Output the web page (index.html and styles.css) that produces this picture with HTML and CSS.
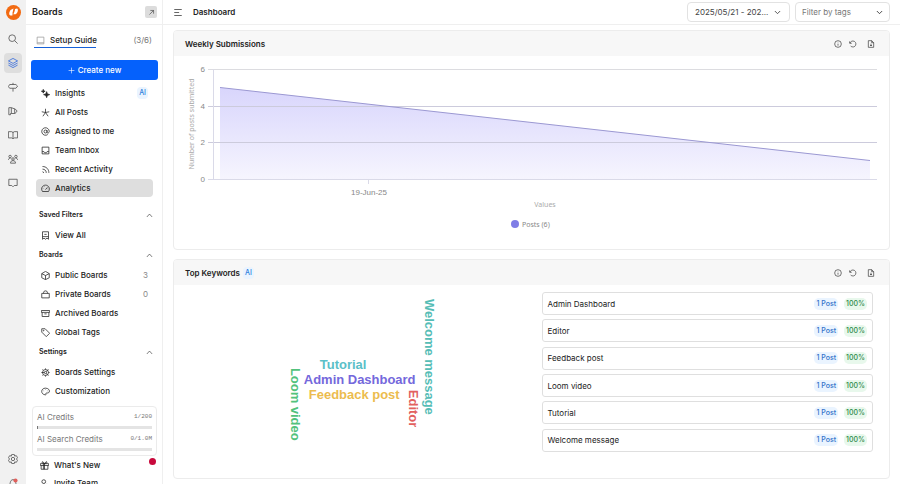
FILE: index.html
```html
<!DOCTYPE html>
<html lang="en">
<head>
    <meta charset="UTF-8">
    <meta name="viewport" content="width=device-width, initial-scale=1.0">
    <title>Dashboard</title>
    <link rel="stylesheet" href="styles.css">
</head>
<body>
    <svg class="sprite" aria-hidden="true">
        <symbol id="i-up" viewBox="0 0 24 24"><path d="M3 17l9-10 9 10"/></symbol>
        <symbol id="i-down" viewBox="0 0 24 24"><path d="M3 7l9 9 9-9"/></symbol>
        <symbol id="i-info" viewBox="0 0 24 24"><circle cx="12" cy="12" r="10"/><path d="M12 11v6M12 7v1"/></symbol>
        <symbol id="i-reset" viewBox="0 0 24 24"><path d="M2 4v6h6M3 9c2-4 5-6 9-6a9 9 0 1 1-7 15"/></symbol>
        <symbol id="i-file" viewBox="0 0 24 24"><path d="M4 2h10l6 6v14H4zM14 2v6h6M12 11v7M9 15l3 3 3-3"/></symbol>
    </svg>

    <div class="app">
        <nav class="rail" aria-label="Main">
            <a href="#" class="logo" aria-label="Home">
                <svg viewBox="0 0 30 30"><circle cx="15" cy="15" r="15" fill="#f26a12"/><path d="M9 10l6-3-2 9c0 2 2 2 3 0l2-8 4-1c3 1 2 7-1 10-2 2-4 2-6 1l-2 3h-4c-3-1-3-4-2-7z" fill="#fff"/><path d="M17 8l-4 13" stroke="#f26a12" stroke-width="1.5"/></svg>
            </a>
            <a href="#" class="rail-link" aria-label="Search"><svg class="icon" viewBox="0 0 24 24"><circle cx="10" cy="10" r="8"/><path d="M16 16l7 7"/></svg></a>
            <a href="#" class="rail-link active" aria-label="Boards"><svg class="icon" viewBox="0 0 24 24"><path d="M12 1l11 6-11 6L1 7zM1 12l11 6 11-6M1 17l11 6 11-6"/></svg></a>
            <a href="#" class="rail-link" aria-label="Roadmap"><svg class="icon" viewBox="0 0 24 24"><path d="M4 6h15l4 4-4 5H4l-3-4zM12 2v4M12 15v8"/></svg></a>
            <a href="#" class="rail-link" aria-label="Changelog"><svg class="icon" viewBox="0 0 24 24"><path d="M2 4h6l8 3v11H6v3H2zM8 4v13M16 6l6 6-6 7"/></svg></a>
            <a href="#" class="rail-link" aria-label="Help center"><svg class="icon" viewBox="0 0 24 24"><path d="M12 5v15M1 4h8l3 2 3-2h8v15h-8l-3 2-3-2H1z"/></svg></a>
            <a href="#" class="rail-link" aria-label="Users"><svg class="icon" viewBox="0 0 24 24"><circle cx="12" cy="12" r="3"/><circle cx="5" cy="6" r="3"/><circle cx="19" cy="6" r="3"/><path d="M6 22c0-4 2-6 6-6s6 2 6 6zM1 14c0-3 2-4 5-4M23 14c0-3-2-4-5-4"/></svg></a>
            <a href="#" class="rail-link" aria-label="Messages"><svg class="icon" viewBox="0 0 24 24"><path d="M2 3h20v15h-7l-3 3-3-3H2z"/></svg></a>
            <div class="rail-bottom">
                <a href="#" class="rail-link" aria-label="Settings"><svg class="icon" viewBox="0 0 24 24"><path d="M9 1h6l1 4 4-1 3 5-3 3 3 3-3 5-4-1-1 4H9l-1-4-4 1-3-5 3-3-3-3 3-5 4 1z"/><circle cx="12" cy="12" r="4"/></svg></a>
                <a href="#" class="rail-link" aria-label="Notifications"><svg class="icon" viewBox="0 0 24 24"><path d="M3 19c3-3 1-15 9-15s6 12 9 15zM9 22h6"/><circle class="alert" cx="18" cy="6" r="5"/></svg></a>
            </div>
        </nav>

        <aside class="sidebar">
            <header class="side-head">
                <h2>Boards</h2>
                <button class="open-btn" aria-label="Open board"><svg class="icon" viewBox="0 0 24 24"><path d="M5 19L19 5M8 5h11v11"/></svg></button>
            </header>

            <div class="setup">
                <a href="#" class="setup-link"><svg class="icon" viewBox="0 0 24 24"><path d="M3 3h18v18H3zM3 18h18"/></svg>Setup Guide</a>
                <span class="setup-count">(3/6)</span>
            </div>

            <button class="create-btn"><svg class="icon" viewBox="0 0 24 24"><path d="M12 2v20M2 12h20"/></svg>Create new</button>

            <ul class="menu">
                <li><a href="#"><svg class="icon" viewBox="0 0 24 24"><path class="solid" d="M15 7l2 6 6 2-6 2-2 6-2-6-6-2 6-2zM6 1l1 4 4 1-4 1-1 4-1-4-4-1 4-1z"/></svg>Insights<span class="ai">AI</span></a></li>
                <li><a href="#"><svg class="icon" viewBox="0 0 24 24"><path d="M12 2v10M2 10l10 2 10-2M5 22l7-10 7 10"/></svg>All Posts</a></li>
                <li><a href="#"><svg class="icon" viewBox="0 0 24 24"><circle cx="12" cy="12" r="4"/><path d="M16 8v6c0 3 6 3 6-2a10 10 0 1 0-4 8"/></svg>Assigned to me</a></li>
                <li><a href="#"><svg class="icon" viewBox="0 0 24 24"><path d="M3 3h18v18H3zM3 15h5l2 3h4l2-3h5"/></svg>Team Inbox</a></li>
                <li><a href="#"><svg class="icon" viewBox="0 0 24 24"><path d="M4 4c10 0 17 7 17 17M4 11c6 0 10 4 10 10M4 18c2 0 3 1 3 3"/></svg>Recent Activity</a></li>
                <li><a href="#" class="selected"><svg class="icon" viewBox="0 0 24 24"><path d="M4 20C-2 11 5 3 12 3s14 8 8 17zM12 15l5-6M5 12h1M9 7v1M19 13h-1"/></svg>Analytics</a></li>
            </ul>

            <h3 class="group first"><button>Saved Filters<svg class="icon"><use href="#i-up"/></svg></button></h3>
            <ul class="menu">
                <li><a href="#"><svg class="icon" viewBox="0 0 24 24"><path d="M4 2h16v20l-4-3-4 3-4-3-4 3zM4 15h16M9 9h6"/></svg>View All</a></li>
            </ul>

            <h3 class="group"><button>Boards<svg class="icon"><use href="#i-up"/></svg></button></h3>
            <ul class="menu">
                <li><a href="#"><svg class="icon" viewBox="0 0 24 24"><path d="M12 1l10 6v11l-10 5-10-5V7zM2 7l10 5 10-5M12 12v11"/></svg>Public Boards<span class="count">3</span></a></li>
                <li><a href="#"><svg class="icon" viewBox="0 0 24 24"><path d="M2 9h20v12H2zM7 9V6c0-5 10-5 10 0v3"/></svg>Private Boards<span class="count">0</span></a></li>
                <li><a href="#"><svg class="icon" viewBox="0 0 24 24"><path d="M1 4h22v5H1zM3 9v11h18V9M9 13h6"/></svg>Archived Boards</a></li>
                <li><a href="#"><svg class="icon" viewBox="0 0 24 24"><path d="M2 2h9l12 12-9 9L2 11z"/><circle cx="7" cy="7" r="1"/></svg>Global Tags</a></li>
            </ul>

            <h3 class="group"><button>Settings<svg class="icon"><use href="#i-up"/></svg></button></h3>
            <ul class="menu">
                <li><a href="#"><svg class="icon" viewBox="0 0 24 24"><circle cx="12" cy="12" r="8"/><circle cx="12" cy="12" r="3"/><path d="M12 1v3M12 20v3M1 12h8M20 12h3M4 4l2 2M18 18l2 2M14 9l6-5M4 20l2-2M14 15l4 3"/></svg>Boards Settings</a></li>
                <li><a href="#"><svg class="icon" viewBox="0 0 24 24"><path d="M12 21C-2 20-1 3 12 3c12 0 14 13 5 13-4 0-4 0-4 2 0 1 1 3-1 3z"/><path d="M7 10v1M12 7v1M17 10v1"/></svg>Customization</a></li>
            </ul>

            <div class="credits">
                <div class="credit"><label for="ai-credits">AI Credits</label><span>1/200</span></div>
                <progress id="ai-credits" value="1" max="200"></progress>
                <div class="credit"><label for="ai-search">AI Search Credits</label><span>0/1.0M</span></div>
                <progress id="ai-search" value="0" max="100"></progress>
            </div>

            <ul class="menu extra">
                <li><a href="#"><svg class="icon" viewBox="0 0 24 24"><path d="M1 7h22v5H1zM3 12v10h18V12M12 7v15M9 7v15M12 7C5 8 4 1 8 2l4 5 4-5c4-1 3 6-4 5"/></svg>What's New<span class="dot"></span></a></li>
                <li><a href="#"><svg class="icon" viewBox="0 0 24 24"><circle cx="10" cy="7" r="5"/><path d="M2 22c0-5 3-8 9-8M18 13v10M13 18h10"/></svg>Invite Team</a></li>
            </ul>
        </aside>

        <main class="main">
            <header class="topbar">
                <button class="toggle" aria-label="Toggle sidebar"><svg class="icon" viewBox="0 0 24 24"><path d="M2 4h20M2 12h13M2 20h20"/></svg></button>
                <h1>Dashboard</h1>
                <button class="field date">2025/05/21 - 202...<svg class="icon"><use href="#i-down"/></svg></button>
                <div class="tags">
                    <select class="field" aria-label="Filter by tags"><option>Filter by tags</option></select>
                    <svg class="icon"><use href="#i-down"/></svg>
                </div>
            </header>

            <div class="cards">
                <section class="card">
                    <header class="card-head">
                        <h2>Weekly Submissions</h2>
                        <div class="tools">
                            <button aria-label="Info"><svg class="icon"><use href="#i-info"/></svg></button>
                            <button aria-label="Reset"><svg class="icon"><use href="#i-reset"/></svg></button>
                            <button aria-label="Export"><svg class="icon"><use href="#i-file"/></svg></button>
                        </div>
                    </header>
                    <svg class="chart" viewBox="0 0 715 193" role="img" aria-label="Weekly submissions chart">
                        <defs>
                            <linearGradient id="fill" x1="0" y1="31" x2="0" y2="123" gradientUnits="userSpaceOnUse">
                                <stop offset="0" stop-color="#d8d5fc"/>
                                <stop offset="1" stop-color="#f6f5fe"/>
                            </linearGradient>
                        </defs>
                        <path class="grid" d="M34 13.500H703M34 50.500H703M34 86.500H703"/>
                        <path d="M46 31.500L696 104.500V123H46z" fill="url(#fill)"/>
                        <path class="grid over" d="M34 50.500H703M34 86.500H703"/>
                        <path class="line" d="M46 31.500L696 104.500"/>
                        <path class="axis" d="M39.500 13V123M34 123.500H703M194.500 123v5"/>
                        <g class="ticks">
                            <text x="31" y="16">6</text>
                            <text x="31" y="53">4</text>
                            <text x="31" y="89">2</text>
                            <text x="31" y="126">0</text>
                        </g>
                        <text class="date-label" x="195" y="139">19-Jun-25</text>
                        <text class="axis-title" transform="translate(20 68) rotate(-90)">Number of posts submitted</text>
                        <text class="axis-title" x="371" y="151">Values</text>
                        <circle cx="341" cy="168" r="4" fill="#7f7de6"/>
                        <text class="legend" x="348" y="171">Posts (6)</text>
                    </svg>
                </section>

                <section class="card">
                    <header class="card-head">
                        <h2>Top Keywords</h2><span class="ai">AI</span>
                        <div class="tools">
                            <button aria-label="Info"><svg class="icon"><use href="#i-info"/></svg></button>
                            <button aria-label="Reset"><svg class="icon"><use href="#i-reset"/></svg></button>
                            <button aria-label="Export"><svg class="icon"><use href="#i-file"/></svg></button>
                        </div>
                    </header>
                    <div class="keywords">
                        <svg class="cloud" viewBox="0 0 332 184" role="img" aria-label="Keyword cloud">
                            <text x="130" y="77" fill="#5bc0c8">Tutorial</text>
                            <text x="114" y="92" fill="#7468dc">Admin Dashboard</text>
                            <text x="119" y="107" fill="#ecbc4e">Feedback post</text>
                            <text transform="translate(101 76) rotate(90)" fill="#52c27c">Loom video</text>
                            <text transform="translate(219 98) rotate(90)" fill="#e2605f">Editor</text>
                            <text transform="translate(235 7) rotate(90)" fill="#56bdb6">Welcome message</text>
                        </svg>
                        <ul class="keyword-list">
                            <li>Admin Dashboard<span class="pill posts">1 Post</span><span class="pill percent">100%</span></li>
                            <li>Editor<span class="pill posts">1 Post</span><span class="pill percent">100%</span></li>
                            <li>Feedback post<span class="pill posts">1 Post</span><span class="pill percent">100%</span></li>
                            <li>Loom video<span class="pill posts">1 Post</span><span class="pill percent">100%</span></li>
                            <li>Tutorial<span class="pill posts">1 Post</span><span class="pill percent">100%</span></li>
                            <li>Welcome message<span class="pill posts">1 Post</span><span class="pill percent">100%</span></li>
                        </ul>
                    </div>
                </section>
            </div>
        </main>
    </div>
</body>
</html>
```
FILE: styles.css
```css
* {
    box-sizing: border-box;
}
body {
    margin: 0;
    font-family: Inter, "Liberation Sans", sans-serif;
    font-size: 8px;
    line-height: 12px;
    color: #333;
    background: #fff;
}
h1, h2, h3, ul {
    margin: 0;
    padding: 0;
    font-size: 8px;
    font-weight: 600;
    color: #222;
}
ul {
    list-style: none;
    font-weight: 400;
}
a {
    color: inherit;
    text-decoration: none;
}
button, select {
    font: inherit;
    color: inherit;
    border: none;
    background: none;
    padding: 0;
    cursor: pointer;
}
.sprite {
    display: none;
}
.icon {
    width: 9px;
    height: 9px;
    flex: none;
    fill: none;
    stroke: currentColor;
    stroke-width: 2;
}
.solid {
    fill: currentColor;
}
.app {
    display: flex;
    height: 100vh;
    overflow: hidden;
}

/* icon rail */
.rail {
    flex: none;
    width: 26px;
    background: #f1f1f1;
    display: flex;
    flex-direction: column;
    align-items: center;
    gap: 4px;
    padding-top: 5px;
    color: #555;
}
.logo {
    height: 20px;
}
.logo svg {
    display: block;
    width: 15px;
    height: 15px;
}
.rail-link {
    display: flex;
    align-items: center;
    justify-content: center;
    width: 18px;
    height: 20px;
    border-radius: 4px;
}
.rail-link .icon {
    width: 10px;
    height: 10px;
}
.rail-link.active {
    background: #dedede;
    color: #3b6fdc;
}
.rail-bottom {
    display: flex;
    flex-direction: column;
    gap: 4px;
    margin-top: auto;
    margin-bottom: -9px;
}
.alert {
    fill: #e0605c;
    stroke: none;
}

/* sidebar */
.sidebar {
    flex: none;
    width: 137px;
    border-right: 1px solid #efefef;
}
.side-head {
    display: flex;
    align-items: center;
    justify-content: space-between;
    height: 25px;
    padding: 0 5px 0 6px;
    border-bottom: 1px solid #efefef;
}
.side-head h2 {
    font-size: 9px;
}
.open-btn {
    display: flex;
    align-items: center;
    justify-content: center;
    width: 12px;
    height: 12px;
    border-radius: 2px;
    background: #dcdcdc;
}
.open-btn .icon {
    width: 7px;
    height: 7px;
}
.setup {
    display: flex;
    justify-content: space-between;
    align-items: flex-start;
    padding: 8px 10px 0 8px;
    line-height: 14px;
}
.setup-link {
    display: flex;
    align-items: center;
    gap: 5px;
    width: 62px;
    height: 15px;
    padding-left: 2px;
    font-weight: 500;
    white-space: nowrap;
    border-bottom: 1px solid #1560d8;
    color: #222;
}
.setup-link .icon {
    color: #999;
}
.setup-count {
    color: #777;
}
.create-btn {
    display: flex;
    align-items: center;
    justify-content: center;
    gap: 3px;
    width: calc(100% - 9px);
    height: 20px;
    margin: 12px 4px 4px 5px;
    border-radius: 3px;
    background: #0561fc;
    color: #fff;
    font-weight: 500;
}
.create-btn .icon {
    width: 7px;
    height: 7px;
}
.menu {
    display: flex;
    flex-direction: column;
    gap: 1px;
    padding: 0 9px 0 10px;
}
.menu a {
    display: flex;
    align-items: center;
    gap: 5px;
    height: 18px;
    padding: 0 5px;
    border-radius: 4px;
    font-weight: 500;
}
.menu .selected {
    background: #dedede;
}
.ai {
    padding: 0 2px;
    border-radius: 4px;
    background: #eaf4ff;
    color: #2f80dc;
    font-size: 7px;
    font-weight: 500;
}
.menu .ai, .menu .count, .menu .dot {
    margin-left: auto;
}
.count {
    color: #888;
    font-size: 8px;
    font-weight: 400;
}
.group {
    padding: 5px 0;
}
.group.first {
    padding-top: 12px;
}
.group button {
    display: flex;
    align-items: center;
    justify-content: space-between;
    width: 100%;
    height: 12px;
    padding: 0 9px 0 13px;
    font-size: 7px;
    font-weight: 600;
}
.group .icon {
    width: 7px;
    height: 7px;
}
.credits {
    margin: 6px 5px 0 6px;
    padding: 4px;
    border: 1px solid #ebebeb;
    border-radius: 4px;
    color: #777;
}
.credit {
    display: flex;
    justify-content: space-between;
}
.credit span {
    font-family: "Liberation Mono", monospace;
    font-size: 6px;
}
progress {
    display: block;
    appearance: none;
    width: 100%;
    height: 3px;
    margin: 3px 0 4px;
    border: none;
    background: #e4e4e4;
}
progress:last-child {
    margin-bottom: 0;
}
progress::-webkit-progress-bar {
    background: #e4e4e4;
}
progress::-webkit-progress-value {
    background: #777;
}
.extra {
    gap: 0;
    padding: 0 1px 0 9px;
}
.dot {
    width: 7px;
    height: 7px;
    margin-bottom: 7px;
    border-radius: 50%;
    background: #c8093c;
}

/* main area */
.main {
    flex: 1;
    min-width: 0;
}
.topbar {
    display: flex;
    align-items: center;
    height: 25px;
    padding: 0 10px;
    gap: 5px;
    border-bottom: 1px solid #efefef;
}
.topbar h1 {
    margin: 0 auto 0 5px;
}
.toggle {
    display: flex;
}
.toggle .icon {
    width: 10px;
}
.field {
    display: flex;
    align-items: center;
    justify-content: space-between;
    height: 20px;
    padding: 0 8px;
    border: 1px solid #e2e2e2;
    border-radius: 4px;
    background: #fff;
    color: #444;
}
.field .icon, .tags .icon {
    width: 7px;
    height: 7px;
    stroke-width: 3;
}
.date {
    width: 103px;
    padding-left: 7px;
}
.tags {
    position: relative;
    width: 95px;
}
.tags .field {
    appearance: none;
    width: 100%;
    padding-left: 6px;
    color: #777;
}
.tags .icon {
    position: absolute;
    right: 7px;
    top: 7px;
    pointer-events: none;
}
.cards {
    display: flex;
    flex-direction: column;
    gap: 9px;
    padding: 5px 10px;
}
.card {
    border: 1px solid #ececec;
    border-radius: 4px;
    overflow: hidden;
}
.card-head {
    display: flex;
    align-items: center;
    gap: 3px;
    height: 25px;
    padding: 0 14px 0 11px;
    background: #f7f7f7;
}
.tools {
    display: flex;
    gap: 7px;
    margin-left: auto;
}
.tools button {
    display: flex;
}
.tools button:last-child {
    margin-left: 3px;
}
.tools .icon {
    width: 8px;
    height: 8px;
}
.chart {
    display: block;
    width: 100%;
}
.grid, .axis {
    fill: none;
    stroke: #dcdce0;
}
.over {
    stroke: #cccbdc;
}
.axis {
    stroke: #dadae8;
}
.line {
    stroke: #9b98d2;
}
.ticks {
    font-family: "Liberation Sans", sans-serif;
    text-anchor: end;
    fill: #888;
}
.date-label {
    font-family: "Liberation Sans", sans-serif;
    text-anchor: middle;
    fill: #888;
}
.axis-title, .legend {
    font-family: "Noto Sans", sans-serif;
    font-size: 7px;
    text-anchor: middle;
    fill: #aaa;
}
.legend {
    text-anchor: start;
    fill: #888;
}
.keywords {
    display: grid;
    grid-template-columns: 1fr 1fr;
    gap: 20px;
    padding: 7px 16px 2px;
}
.cloud {
    display: block;
    width: 100%;
    font-family: "Liberation Sans", sans-serif;
    font-size: 13px;
    font-weight: 700;
}
.keyword-list {
    display: flex;
    flex-direction: column;
    justify-content: space-between;
    padding-bottom: 24px;
}
.keyword-list li {
    display: flex;
    align-items: center;
    gap: 6px;
    height: 23px;
    padding: 0 5px;
    border: 1px solid #dfdfdf;
    border-radius: 3px;
}
.pill {
    padding: 0 2px;
    border-radius: 5px;
    font-size: 7px;
    font-weight: 500;
}
.posts {
    margin-left: auto;
    background: #eaf4ff;
    color: #2f70c9;
}
.percent {
    background: #e8f8ec;
    color: #2d8a4b;
}
```
